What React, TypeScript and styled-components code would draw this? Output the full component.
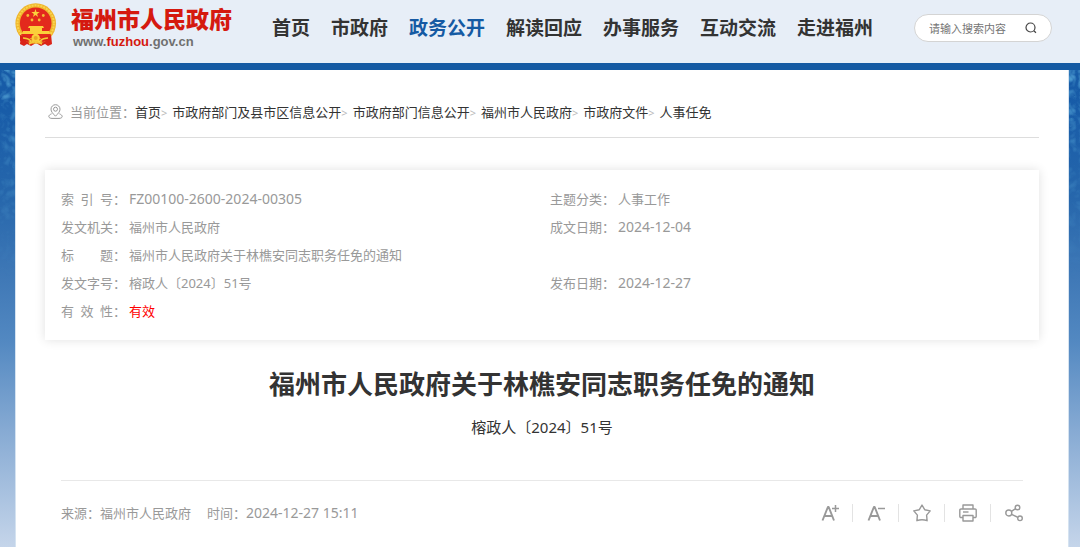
import React from "react";
import styled, { createGlobalStyle, css } from "styled-components";

const GlobalStyle = createGlobalStyle`
  * { box-sizing: border-box; }
  html, body { margin: 0; padding: 0; }
  body {
    min-height: 100vh;
    background: #c5d5ea;
    font-family: "Noto Sans", "Noto Sans CJK SC", sans-serif;
    font-size: 13px;
    color: #999;
  }
  #root { min-height: 100vh; }
  h1, p, ul, ol, dl, dd { margin: 0; padding: 0; }
  ul, ol { list-style: none; }
  button, input { font-family: inherit; }
`;

const Page = styled.div`
  position: relative;
  z-index: 0;
  display: flex;
  flex-direction: column;
  min-height: 100vh;
  background: linear-gradient(
    to bottom,
    #1459a4 0,
    #185ca8 110px,
    #2767ac 200px,
    #4079b7 280px,
    #5288c1 340px,
    #86aad3 430px,
    #c5d5ea 547px
  );
`;

const Texture = styled.svg`
  position: absolute;
  inset: 0;
  z-index: -1;
  width: 100%;
  height: 280px;
`;

const Header = styled.header`
  display: flex;
  align-items: flex-start;
  height: 70px;
  padding: 0 28px 0 15px;
  background: #e7eef7;
  border-bottom: 7px solid #155aa3;
`;

const Brand = styled.a`
  display: flex;
  flex: none;
  width: 257px;
  gap: 14px;
  padding-top: 3px;
  text-decoration: none;
`;

const BrandText = styled.span`
  display: flex;
  flex-direction: column;
  padding-top: 3px;
`;

const BrandName = styled.span`
  font-family: "Liberation Sans", "Noto Sans CJK SC", sans-serif;
  font-size: 23px;
  line-height: 28px;
  font-weight: 900;
  color: #d5190f;
`;

const BrandUrl = styled.span`
  padding-left: 2px;
  font-family: "Liberation Sans", Arial, sans-serif;
  font-size: 13px;
  line-height: 16px;
  font-weight: 700;
  color: #707070;
`;

const BrandUrlMark = styled.span`
  color: #d5190f;
`;

const Nav = styled.nav`
  flex: 1;
  padding-top: 14px;

  ul { display: flex; gap: 21px; }
`;

const NavLink = styled.a<{ $active?: boolean }>`
  display: block;
  font-size: 19px;
  line-height: 28px;
  font-weight: 700;
  white-space: nowrap;
  text-decoration: none;
  color: ${(p) => (p.$active ? "#155aa3" : "#333")};
`;

const Search = styled.form`
  display: flex;
  align-items: center;
  flex: none;
  width: 138px;
  height: 28px;
  margin-top: 14px;
  padding: 0 14px;
  border: 1px solid #d4d4d4;
  border-radius: 14px;
  background: #fff;
`;

const SearchInput = styled.input`
  flex: 1;
  min-width: 0;
  padding: 0;
  border: 0;
  outline: 0;
  background: none;
  font-size: 11px;
  color: #333;

  &::placeholder { color: #757575; opacity: 1; }
`;

const IconButton = styled.button`
  display: flex;
  padding: 0;
  border: 0;
  background: none;
  color: inherit;
  cursor: pointer;
`;

const SearchButton = styled(IconButton)`
  color: #444;
`;

const Main = styled.main`
  flex: 1;
  margin: 0 11px 0 15px;
  padding: 0 29px;
  border: solid #d5e3f1;
  border-width: 0 1px;
  background: #fff;
`;

const Breadcrumb = styled.nav`
  display: flex;
  align-items: center;
  height: 68px;
  padding: 16px 0 0 3px;
  border-bottom: 1px solid #ddd;
  line-height: 20px;

  ol { display: flex; }
`;

const CrumbLabel = styled.span`
  padding-left: 7px;
`;

const Crumb = styled.li`
  &:not(:last-child)::after {
    content: ">";
    margin-right: 5px;
    font-size: 11px;
    line-height: 1;
    color: #bbb;
  }

  a { color: #333; text-decoration: none; }
`;

const InfoCard = styled.dl`
  display: grid;
  grid-template-columns: 1fr 1fr;
  margin-top: 32px;
  padding: 15px 0 15px 16px;
  background: #fff;
  box-shadow: 0 0 10px rgba(0, 0, 0, 0.12);
`;

const InfoItem = styled.div<{ $wide?: boolean }>`
  display: flex;
  line-height: 28px;
  ${(p) => p.$wide && css`grid-column: 1 / -1;`}
`;

const InfoLabel = styled.dt`
  display: flex;
  width: 68px;

  span { width: 52px; text-align: justify; text-align-last: justify; }
`;

const InfoValue = styled.dd<{ $valid?: boolean; $numeric?: boolean }>`
  font-size: ${(p) => (p.$numeric ? "14px" : "13px")};
  color: ${(p) => (p.$valid ? "#f00" : "inherit")};
`;

const Article = styled.article`
  padding: 0 16px;
`;

const Title = styled.h1`
  padding-top: 26px;
  font-size: 26px;
  line-height: 36px;
  font-weight: 700;
  text-align: center;
  color: #333;
`;

const DocNumber = styled.p`
  padding: 13px 0 41px;
  font-size: 15px;
  line-height: 24px;
  text-align: center;
  color: #333;
`;

const Meta = styled.div`
  display: flex;
  align-items: center;
  justify-content: space-between;
  height: 64px;
  border-top: 1px solid #e8e8e8;
`;

const Source = styled.p`
  display: flex;
  gap: 16px;
  line-height: 20px;
`;

const Time = styled.time`
  font-size: 14px;
`;

const Tools = styled.ul`
  display: flex;
`;

const Tool = styled.li`
  padding: 0 13px 0 14px;
  border-left: 1px solid #e3e3e3;

  &:first-child { border-left: 0; }
  &:last-child { padding-right: 0; }
`;

const Emblem = () => (
  <svg width="42" height="45" viewBox="0 0 42 45" aria-hidden="true">
    <path d="M6 31 5 41l4 2 3-2 4 2 5-3 5 3 4-2 3 2 4-2-1-10z" fill="#da2318" />
    <circle cx="20.700" cy="20.500" r="20.300" fill="#efb52c" />
    <circle cx="20.700" cy="20.500" r="18.200" fill="none" stroke="#f9d34e" strokeWidth="2" strokeDasharray="2 1" />
    <circle cx="20.700" cy="20.200" r="15.800" fill="#e3291d" />
    <path d="m20.500 6 1 3h3.200l-2.600 1.900 1 3.100-2.600-1.900-2.600 1.900 1-3.100L16.300 9h3.200z" fill="#fbd23c" />
    <g fill="#f3bd36">
      <circle cx="12.800" cy="12.500" r="1.400" />
      <circle cx="28.300" cy="12.500" r="1.400" />
      <circle cx="17" cy="17" r="1.400" />
      <circle cx="24.200" cy="17" r="1.400" />
    </g>
    <path d="M14 23h14l1 2h-2v3h7l1 3H7l1-3h7v-3h-2z" fill="#fbd03a" />
    <path d="M6 31h30l-3 4H9z" fill="#e3291d" />
    <circle cx="20.700" cy="35" r="4.200" fill="#fbd03a" />
    <circle cx="20.700" cy="35" r="2" fill="#e9a727" />
    <path d="M5 32q8 1 12 5l-4 2q-5-2-8-1zM36 32q-8 1-12 5l4 2q5-2 8-1z" fill="#da2318" />
    <path d="M8 35q5 0 8 3M33 35q-5 0-8 3M14 41l6-3 7 3" fill="none" stroke="#f6c838" strokeWidth="1.500" />
  </svg>
);

const SearchIcon = () => (
  <svg width="12" height="12" viewBox="0 0 12 12" fill="none" stroke="currentColor" strokeWidth="1.200" aria-hidden="true">
    <circle cx="5.500" cy="5.500" r="4.500" />
    <path d="m8.800 8.800 2.200 2" />
  </svg>
);

const PinIcon = () => (
  <svg width="15" height="15" viewBox="0 0 15 15" fill="none" stroke="#999" aria-hidden="true">
    <path d="M7.500 12.200C5 9.600 3 7.800 3 5.200a4.500 4.500 0 0 1 9 0c0 2.600-2 4.400-4.500 7z" />
    <circle cx="7.500" cy="5.200" r="2" />
    <path d="M3.600 9.800C1.700 10.600.8 11.500.8 12.500c0 1.200 1.500 1.900 3.200 1.900h7c1.700 0 3.200-.7 3.200-1.900 0-1-.9-1.900-2.800-2.700" />
  </svg>
);

const ToolIcon = ({ children }: { children: React.ReactNode }) => (
  <svg width="18" height="18" viewBox="0 0 18 18" fill="none" stroke="currentColor" strokeWidth="1.400" strokeLinejoin="round" aria-hidden="true">
    {children}
  </svg>
);

const tools = [
  {
    label: "放大字体",
    icon: (
      <>
        <path d="M1.500 16.500 6.900 3h.8l5.300 13.500M3.500 12h7.600" strokeWidth="1.900" />
        <path d="M11 4.500h7M14.500 1v7" strokeWidth="1.500" />
      </>
    ),
  },
  {
    label: "缩小字体",
    icon: (
      <>
        <path d="M1.500 16.500 6.900 3h.8l5.300 13.500M3.500 12h7.600" strokeWidth="1.900" />
        <path d="M11 4.500h7" strokeWidth="1.500" />
      </>
    ),
  },
  {
    label: "收藏",
    icon: <path d="m9 1 2.700 4.700 5.500 1.200-3.600 4.200.5 5.600q-2.500-1-5.100-1t-5.100 1l.5-5.600L.8 6.900l5.500-1.200z" />,
  },
  {
    label: "打印",
    icon: (
      <>
        <path d="M4 5V1h10v4M4 13.500H2a1.200 1.200 0 0 1-1.200-1.200V6.200A1.200 1.200 0 0 1 2 5h14a1.200 1.200 0 0 1 1.200 1.200v6.100a1.200 1.200 0 0 1-1.200 1.200h-2M4 11.500h10V17H4z" />
        <path d="M4 8h5.500" />
      </>
    ),
  },
  {
    label: "分享",
    icon: (
      <>
        <circle cx="3.800" cy="9" r="3" />
        <circle cx="12.500" cy="3.500" r="2.300" />
        <circle cx="15" cy="14.300" r="2.300" />
        <path d="m6.400 7.400 4.200-2.700M6.600 10.300l6.200 3" />
      </>
    ),
  },
];

const navItems = ["首页", "市政府", "政务公开", "解读回应", "办事服务", "互动交流", "走进福州"];

const crumbs = ["首页", "市政府部门及县市区信息公开", "市政府部门信息公开", "福州市人民政府", "市政府文件", "人事任免"];

const info = [
  { label: "索 引 号", value: "FZ00100-2600-2024-00305", numeric: true },
  { label: "主题分类", value: "人事工作" },
  { label: "发文机关", value: "福州市人民政府" },
  { label: "成文日期", value: "2024-12-04", numeric: true },
  { label: "标 题", value: "福州市人民政府关于林樵安同志职务任免的通知", wide: true },
  { label: "发文字号", value: "榕政人〔2024〕51号" },
  { label: "发布日期", value: "2024-12-27", numeric: true },
  { label: "有 效 性", value: "有效", valid: true },
];

export default function App() {
  return (
    <>
      <GlobalStyle />
      <Page>
        <Texture aria-hidden="true">
          <defs>
            <filter id="ripple" x="0" y="0" width="100%" height="100%">
              <feTurbulence type="turbulence" baseFrequency="0.09" numOctaves="2" seed="4" />
              <feColorMatrix values="0 0 0 0 0.14  0 0 0 0 0.5  0 0 0 0 0.78  2 0 0 0 -0.3" />
            </filter>
            <linearGradient id="fade" x1="0" y1="0" x2="0" y2="1">
              <stop offset="0.250" stopColor="#fff" stopOpacity="0.700" />
              <stop offset="0.550" stopColor="#fff" stopOpacity="0.300" />
              <stop offset="1" stopColor="#fff" stopOpacity="0" />
            </linearGradient>
            <mask id="fadeMask">
              <rect width="100%" height="100%" fill="url(#fade)" />
            </mask>
          </defs>
          <g mask="url(#fadeMask)">
            <rect width="100%" height="100%" filter="url(#ripple)" />
          </g>
        </Texture>

        <Header>
          <Brand href="#" aria-label="福州市人民政府">
            <Emblem />
            <BrandText>
              <BrandName>福州市人民政府</BrandName>
              <BrandUrl>www.<BrandUrlMark>fuzhou</BrandUrlMark>.gov.cn</BrandUrl>
            </BrandText>
          </Brand>
          <Nav aria-label="主导航">
            <ul>
              {navItems.map((item) => (
                <li key={item}>
                  <NavLink href="#" $active={item === "政务公开"}>{item}</NavLink>
                </li>
              ))}
            </ul>
          </Nav>
          <Search role="search" onSubmit={(e) => e.preventDefault()}>
            <SearchInput type="text" aria-label="搜索" placeholder="请输入搜索内容" />
            <SearchButton type="submit" aria-label="搜索"><SearchIcon /></SearchButton>
          </Search>
        </Header>

        <Main>
          <Breadcrumb aria-label="当前位置">
            <PinIcon />
            <CrumbLabel>当前位置：</CrumbLabel>
            <ol>
              {crumbs.map((crumb) => (
                <Crumb key={crumb}><a href="#">{crumb}</a></Crumb>
              ))}
            </ol>
          </Breadcrumb>

          <InfoCard>
            {info.map((item) => (
              <InfoItem key={item.label} $wide={item.wide}>
                <InfoLabel><span>{item.label}</span>：</InfoLabel>
                <InfoValue $valid={item.valid} $numeric={item.numeric}>{item.value}</InfoValue>
              </InfoItem>
            ))}
          </InfoCard>

          <Article>
            <Title>福州市人民政府关于林樵安同志职务任免的通知</Title>
            <DocNumber>榕政人〔2024〕51号</DocNumber>
            <Meta>
              <Source>
                <span>来源：福州市人民政府</span>
                <span>时间：<Time dateTime="2024-12-27T15:11">2024-12-27 15:11</Time></span>
              </Source>
              <Tools>
                {tools.map((tool) => (
                  <Tool key={tool.label}>
                    <IconButton type="button" aria-label={tool.label}>
                      <ToolIcon>{tool.icon}</ToolIcon>
                    </IconButton>
                  </Tool>
                ))}
              </Tools>
            </Meta>
          </Article>
        </Main>
      </Page>
    </>
  );
}
